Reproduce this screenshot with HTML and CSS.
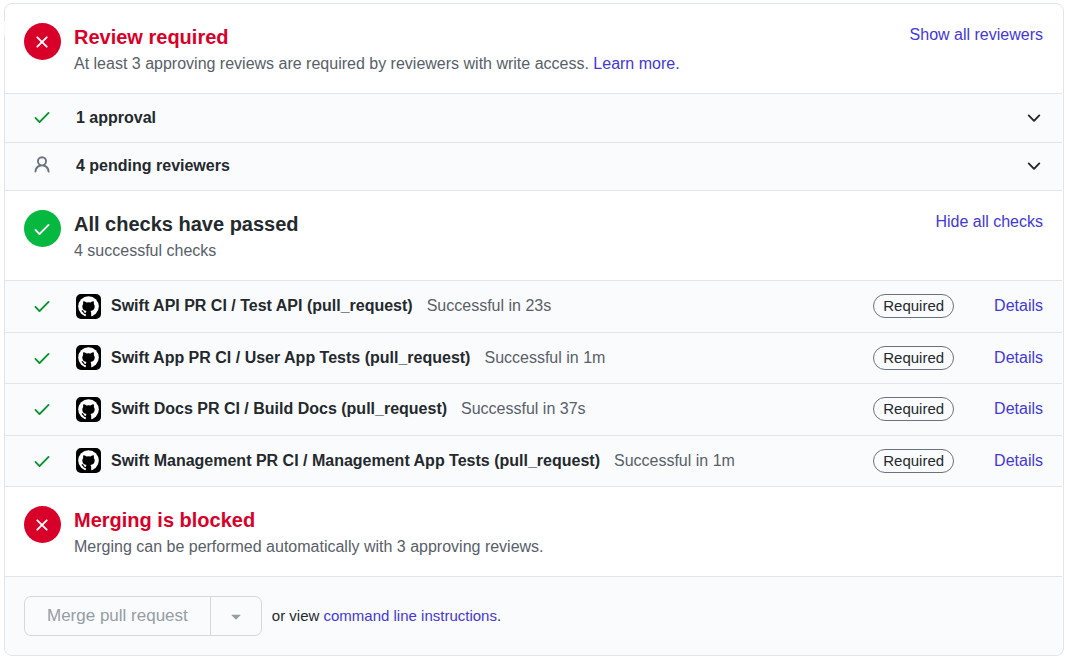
FILE: index.html
```html
<!DOCTYPE html>
<html lang="en">
<head>
<meta charset="utf-8">
<title>Merge status</title>
<link rel="stylesheet" href="styles.css">
</head>
<body>
<svg class="sprite" aria-hidden="true">
  <symbol id="check" viewBox="0 0 16 16"><path d="M13.78 4.22a.75.75 0 010 1.06l-7.25 7.25a.75.75 0 01-1.06 0L2.22 9.28a.75.75 0 011.06-1.06L6 10.94l6.72-6.72a.75.75 0 011.06 0z"/></symbol>
  <symbol id="cross" viewBox="0 0 16 16"><path d="M3.72 3.72a.75.75 0 011.06 0L8 6.94l3.22-3.22a.75.75 0 111.06 1.06L9.06 8l3.22 3.22a.75.75 0 11-1.06 1.06L8 9.06l-3.22 3.22a.75.75 0 01-1.06-1.06L6.94 8 3.72 4.78a.75.75 0 010-1.06z"/></symbol>
  <symbol id="person" viewBox="0 0 16 16"><path d="M10.5 5a2.5 2.5 0 11-5 0 2.5 2.5 0 015 0zm.061 3.073a4 4 0 10-5.123 0 6.004 6.004 0 00-3.431 5.142.75.75 0 001.498.07 4.5 4.5 0 018.99 0 .75.75 0 101.498-.07 6.005 6.005 0 00-3.432-5.142z" fill-rule="evenodd"/></symbol>
  <symbol id="chevron" viewBox="0 0 16 16"><path d="M12.78 6.22a.75.75 0 010 1.06l-4.25 4.25a.75.75 0 01-1.06 0L3.22 7.28a.75.75 0 011.06-1.06L8 9.94l3.72-3.72a.75.75 0 011.06 0z"/></symbol>
  <symbol id="caret" viewBox="0 0 16 16"><path d="M4.427 7.427l3.396 3.396a.25.25 0 00.354 0l3.396-3.396A.25.25 0 0011.396 7H4.604a.25.25 0 00-.177.427z"/></symbol>
  <symbol id="mark" viewBox="0 0 25 25">
    <circle cx="12.500" cy="12.500" r="10.300" fill="#fff"/>
    <path d="M7.300 7.300Q9 7.400 10.500 8.500Q12.500 8 14.500 8.500Q16 7.400 17.700 7.300Q18.200 8.700 17.800 10Q18.800 11.200 18.700 12.800Q18.400 16.500 14.500 17Q15.200 17.800 15.200 19V23.500H9.800V19Q9.800 17.800 10.500 17Q6.600 16.500 6.300 12.800Q6.200 11.200 7.200 10Q6.800 8.700 7.300 7.300Z" fill="#000"/>
    <path d="M5.800 16.600Q7 16.800 7.600 18.200Q8.400 19.800 10.400 19.400" fill="none" stroke="#000" stroke-width="1.200"/>
  </symbol>
</svg>
<main class="card">
  <svg class="card-arrow" viewBox="0 0 5 18" aria-hidden="true"><path class="arrow-fill" d="M5 0L0 5v7l5 5z"/><path class="arrow-line" d="M4.500 .5L0 5M0 12l4.500 4.500"/></svg>

  <section class="summary">
    <span class="badge badge-red"><svg class="icon"><use href="#cross"/></svg></span>
    <div class="summary-text">
      <h2 class="title title-red">Review required</h2>
      <p class="note">At least 3 approving reviews are required by reviewers with write access. <a href="#">Learn more.</a></p>
    </div>
    <button class="link-button" type="button">Show all reviewers</button>
  </section>

  <div class="reviewers">
    <button class="reviewer-row" type="button"><svg class="icon icon-green"><use href="#check"/></svg><span class="reviewer-label">1 approval</span><svg class="icon"><use href="#chevron"/></svg></button>
    <button class="reviewer-row" type="button"><svg class="icon icon-gray"><use href="#person"/></svg><span class="reviewer-label">4 pending reviewers</span><svg class="icon"><use href="#chevron"/></svg></button>
  </div>

  <section class="summary">
    <span class="badge badge-green"><svg class="icon"><use href="#check"/></svg></span>
    <div class="summary-text">
      <h2 class="title">All checks have passed</h2>
      <p class="note">4 successful checks</p>
    </div>
    <button class="link-button" type="button">Hide all checks</button>
  </section>

  <ul class="checks">
    <li class="check-row"><svg class="icon icon-green"><use href="#check"/></svg><span class="avatar"><svg><use href="#mark"/></svg></span><p class="check-text"><strong>Swift API PR CI / Test API (pull_request)</strong><span class="result">Successful in 23s</span></p><span class="required">Required</span><a href="#">Details</a></li>
    <li class="check-row"><svg class="icon icon-green"><use href="#check"/></svg><span class="avatar"><svg><use href="#mark"/></svg></span><p class="check-text"><strong>Swift App PR CI / User App Tests (pull_request)</strong><span class="result">Successful in 1m</span></p><span class="required">Required</span><a href="#">Details</a></li>
    <li class="check-row"><svg class="icon icon-green"><use href="#check"/></svg><span class="avatar"><svg><use href="#mark"/></svg></span><p class="check-text"><strong>Swift Docs PR CI / Build Docs (pull_request)</strong><span class="result">Successful in 37s</span></p><span class="required">Required</span><a href="#">Details</a></li>
    <li class="check-row"><svg class="icon icon-green"><use href="#check"/></svg><span class="avatar"><svg><use href="#mark"/></svg></span><p class="check-text"><strong>Swift Management PR CI / Management App Tests (pull_request)</strong><span class="result">Successful in 1m</span></p><span class="required">Required</span><a href="#">Details</a></li>
  </ul>

  <section class="summary">
    <span class="badge badge-red"><svg class="icon"><use href="#cross"/></svg></span>
    <div class="summary-text">
      <h2 class="title title-red">Merging is blocked</h2>
      <p class="note">Merging can be performed automatically with 3 approving reviews.</p>
    </div>
  </section>

  <footer class="merge-bar">
    <div class="button-group">
      <button class="merge-button" type="button" disabled>Merge pull request</button>
      <button class="merge-options" type="button" aria-label="Select merge method" disabled><svg class="icon"><use href="#caret"/></svg></button>
    </div>
    <p class="merge-note">or view <a href="#">command line instructions</a>.</p>
  </footer>
</main>
</body>
</html>
```

FILE: styles.css
```css
* {
  box-sizing: border-box;
}

body {
  margin: 3px 3px 3px 4px;
  background: #fff;
  color: #24292e;
  font: 16px/24px "Liberation Sans", Arial, sans-serif;
}

h2,
p,
ul {
  margin: 0;
  padding: 0;
}

a {
  color: #4338d8;
  text-decoration: none;
}

button {
  padding: 0;
  border: 0;
  background: none;
  color: inherit;
  font: inherit;
}

.sprite {
  position: absolute;
  width: 0;
  height: 0;
}

.icon {
  display: block;
  flex: none;
  width: 20px;
  height: 20px;
  fill: currentColor;
}

.icon-green {
  color: #0a9431;
}

.icon-gray {
  color: #6a737d;
}

.card {
  position: relative;
  padding-right: 1px;
  border: 1px solid #e1e4e8;
  border-radius: 8px;
}

.card-arrow {
  position: absolute;
  top: 16px;
  left: -5px;
  width: 5px;
  height: 18px;
}

.arrow-fill {
  fill: #f6f8fa;
}

.arrow-line {
  fill: none;
  stroke: #cdd2da;
}

.summary {
  display: flex;
  align-items: flex-start;
  padding: 19px 19px 16px 19px;
}

.badge {
  display: flex;
  flex: none;
  align-items: center;
  width: 37px;
  height: 37px;
  margin-right: 13px;
  padding-left: 8px;
  border-radius: 50%;
  color: #fff;
}

.badge-red {
  background: #d80029;
}

.badge-green {
  background: #05b83f;
}

.summary-text {
  flex: 1;
}

.title {
  font-size: 20px;
  line-height: 28px;
}

.title-red {
  color: #d80029;
}

.note {
  line-height: 26px;
  color: #586069;
}

.link-button {
  color: #4338d8;
}

.reviewers,
.checks {
  display: grid;
  grid-auto-rows: 1fr;
  border-bottom: 1px solid #e1e4e8;
  background: #fafbfc;
}

.reviewers {
  min-height: 98px;
}

.reviewer-row {
  display: flex;
  align-items: center;
  gap: 24px;
  padding: 0 18px 0 27px;
  border-top: 1px solid #e1e4e8;
  font-weight: bold;
  text-align: left;
}

.reviewer-row .icon {
  margin-bottom: 2px;
}

.reviewer-label {
  flex: 1;
}

.checks {
  min-height: 207px;
  list-style: none;
}

.check-row {
  display: flex;
  align-items: center;
  padding: 0 19px 0 27px;
  border-top: 1px solid #e1e4e8;
}

.avatar {
  display: grid;
  flex: none;
  place-items: center;
  width: 25px;
  height: 25px;
  margin: 0 10px 0 24px;
  border-radius: 5px;
  background: #000;
}

.avatar svg {
  width: 25px;
  height: 25px;
}

.check-text {
  flex: 1;
}

.result {
  margin-left: 14px;
  color: #586069;
}

.required {
  margin-right: 40px;
  padding: 0 9px;
  border: 1px solid #6a737d;
  border-radius: 13px;
  font-size: 15px;
  line-height: 22px;
}

.merge-bar {
  display: flex;
  align-items: center;
  gap: 10px;
  padding: 19px;
  border-top: 1px solid #e1e4e8;
  border-radius: 0 0 7px 7px;
  background: #fafbfc;
}

.button-group {
  display: flex;
  height: 40px;
  border: 1px solid #d5d8dc;
  border-radius: 7px;
  color: #959da5;
}

.merge-button {
  padding: 0 22px;
  font-size: 17px;
}

.merge-options {
  padding: 0 15px;
  border-left: 1px solid #d5d8dc;
}

.merge-note {
  font-size: 15px;
}
```
